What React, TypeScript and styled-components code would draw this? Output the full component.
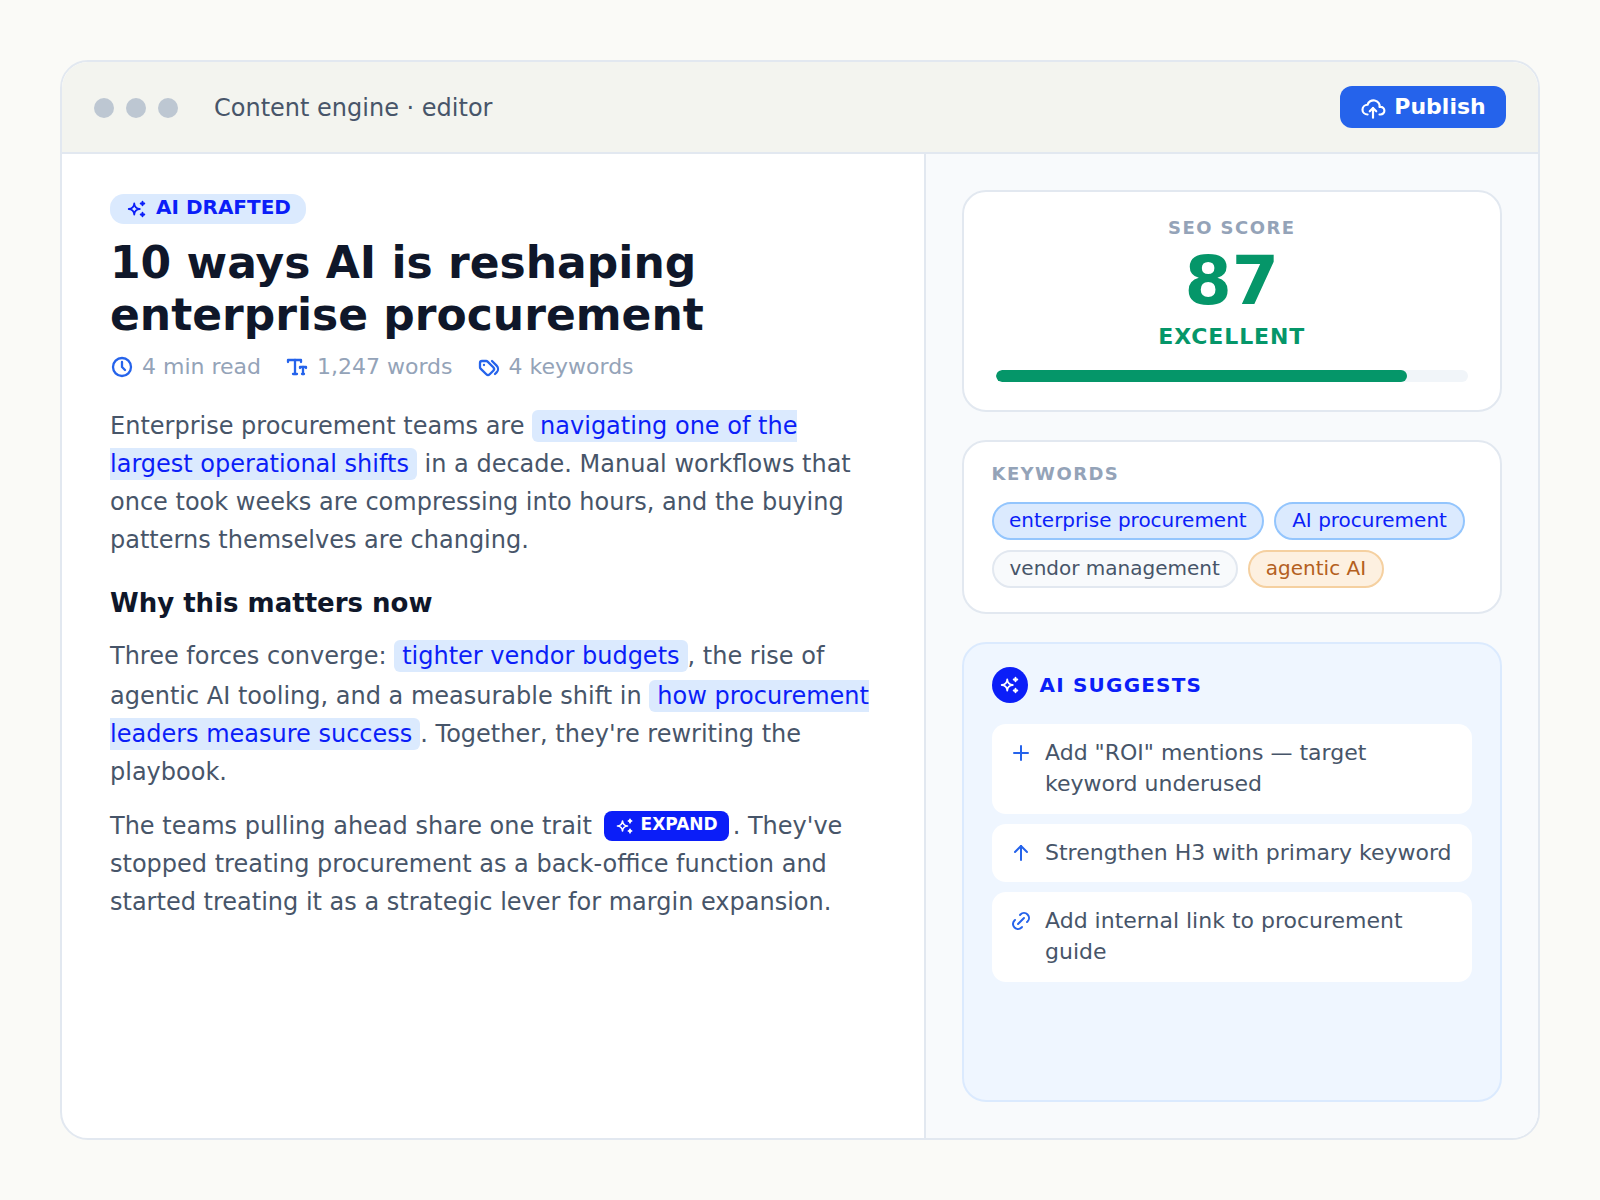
import styled, { createGlobalStyle } from "styled-components";
import { ReactElement } from "react";
import {
    TbArrowUp,
    TbClock,
    TbCloudUpload,
    TbLink,
    TbPlus,
    TbSparkles,
    TbTags,
    TbTextSize,
} from "react-icons/tb";

const BLUE = "#0b1ef8";

const GlobalStyle = createGlobalStyle`
  html, body {
    margin: 0;
    padding: 0;
    background: #fafaf7;
    font-family: "DejaVu Sans", sans-serif;
  }
`

const Page = styled.div`
  width: 1600px;
  height: 1200px;
  box-sizing: border-box;
  padding: 60px;
`

const Window = styled.div`
  height: 1080px;
  box-sizing: border-box;
  display: flex;
  flex-direction: column;
  background: #fff;
  border: 2px solid #e2e8f0;
  border-radius: 28px;
  overflow: hidden;
`

const TitleBar = styled.header`
  display: flex;
  align-items: center;
  padding: 24px 32px;
  background: #f3f4ef;
  border-bottom: 2px solid #e2e8f0;
`

const Dots = styled.div`
  display: flex;
  gap: 12px;
  margin-right: 36px;
  padding-top: 2px;
`

const Dot = styled.span`
  width: 20px;
  height: 20px;
  border-radius: 50%;
  background: #bdc7d2;
`

const WindowTitle = styled.div`
  flex: 1;
  padding-top: 2px;
  font-size: 24px;
  color: #475569;
`

const PublishButton = styled.button`
  display: flex;
  align-items: center;
  justify-content: center;
  gap: 8px;
  width: 166px;
  height: 42px;
  padding: 0 0 2px;
  border: none;
  border-radius: 12px;
  background: #2563eb;
  color: #fff;
  font-family: inherit;
  font-size: 22px;
  font-weight: 700;

  svg {
    margin-top: 3px;
  }
`

const Split = styled.div`
  flex: 1;
  min-height: 0;
  display: grid;
  grid-template-columns: 1fr 614.5px;
`

const Article = styled.main`
  padding: 40px 48px;
`

const DraftBadge = styled.span`
  display: inline-flex;
  align-items: center;
  gap: 8px;
  height: 30px;
  box-sizing: border-box;
  padding: 0 15px 4px 16px;
  border-radius: 14px;
  background: #dbeafe;
  color: ${BLUE};
  font-size: 20px;
  font-weight: 700;
  vertical-align: top;

  svg {
    margin-top: 4px;
  }
`

const Title = styled.h1`
  margin: 13px 0 0;
  font-size: 44px;
  line-height: 52px;
  font-weight: 700;
  color: #0f172a;
`

const Meta = styled.div`
  display: flex;
  gap: 24px;
  margin: 13px 0 28px;
`

const MetaItem = styled.span`
  display: flex;
  align-items: center;
  gap: 8px;
  font-size: 22px;
  color: #94a3b8;

  svg {
    color: #2563eb;
    stroke-width: 2.3;
  }
`

const Paragraph = styled.p`
  margin: 16px 0 0;
  font-size: 24px;
  line-height: 38px;
  color: #475569;

  ${Meta} + & {
    margin-top: 0;
  }
`

const Highlight = styled.span`
  padding: 2px 8px;
  border-radius: 6px;
  background: #dbeafe;
  color: ${BLUE};
`

const TallLine = styled.span`
  display: inline-block;
  width: 0;
  height: 29.25px;
`

const ExpandTag = styled.span`
  display: inline-flex;
  align-items: center;
  gap: 6px;
  height: 30px;
  box-sizing: border-box;
  padding: 0 11px 4px;
  margin: 0 4px;
  border-radius: 8px;
  background: ${BLUE};
  color: #fff;
  font-size: 17px;
  font-weight: 700;
  vertical-align: -2px;

  svg {
    margin-top: 4px;
  }
`

const SubHeading = styled.h3`
  margin: 26px 0 0;
  font-size: 26px;
  line-height: 36px;
  font-weight: 700;
  color: #0f172a;
`

const Sidebar = styled.aside`
  display: flex;
  flex-direction: column;
  gap: 28px;
  padding: 36px;
  background: #f8fafc;
  border-left: 2px solid #e2e8f0;
`

const Card = styled.section`
  padding: 21px 28px 24px;
  background: #fff;
  border: 2px solid #e2e8f0;
  border-radius: 24px;
`

const ScoreCard = styled(Card)`
  padding: 25px 32px 28px;
  text-align: center;
`

const Label = styled.div`
  font-size: 18px;
  line-height: 22px;
  font-weight: 700;
  letter-spacing: 1.44px;
  color: #94a3b8;
`

const Score = styled.div`
  margin: 2px 0 1px;
  font-size: 68px;
  line-height: 80px;
  font-weight: 700;
  color: #059669;
`

const ScoreWord = styled.div`
  font-size: 22px;
  line-height: 30px;
  font-weight: 700;
  letter-spacing: 0.88px;
  color: #059669;
`

const Track = styled.div`
  height: 12px;
  margin-top: 18px;
  border-radius: 6px;
  background: #f1f5f9;
  overflow: hidden;
`

const Fill = styled.div`
  height: 100%;
  border-radius: 6px;
  background: #059669;
`

const Pills = styled.div`
  display: flex;
  flex-wrap: wrap;
  gap: 10px;
  margin-top: 17px;
`

const Pill = styled.span<{ $tone: "blue" | "grey" | "orange" }>`
  padding: 2px 16px 4px;
  border-radius: 20px;
  font-size: 20px;
  line-height: 28px;
  border: 2px solid ${p => ({ blue: "#93c5fd", grey: "#e2e8f0", orange: "#f5d0a0" })[p.$tone]};
  background: ${p => ({ blue: "#dbeafe", grey: "#f8fafc", orange: "#fdf0e0" })[p.$tone]};
  color: ${p => ({ blue: BLUE, grey: "#475569", orange: "#b45f20" })[p.$tone]};

  &:first-child {
    padding: 2px 15.5px 4px;
  }
`

const SuggestCard = styled(Card)`
  flex: 1;
  padding-top: 23px;
  background: #eff6ff;
  border-color: #dbeafe;
`

const SuggestHead = styled.div`
  display: flex;
  align-items: center;
  gap: 12px;
  font-size: 20px;
  font-weight: 700;
  letter-spacing: 1.2px;
  color: ${BLUE};
`

const SparkCircle = styled.span`
  display: flex;
  align-items: center;
  justify-content: center;
  width: 36px;
  height: 36px;
  border-radius: 50%;
  background: ${BLUE};
  color: #fff;
`

const SuggestList = styled.div`
  display: flex;
  flex-direction: column;
  gap: 10px;
  margin-top: 21px;
`

const SuggestItem = styled.div`
  display: flex;
  gap: 12px;
  padding: 14px 18px 14px 17.5px;
  border-radius: 14px;
  background: #fff;
  font-size: 22px;
  line-height: 1.4;
  color: #475569;

  svg {
    flex: none;
    margin-top: 3px;
    color: #2563eb;
  }
`

export const App = (): ReactElement => {
    return (
        <Page>
            <GlobalStyle />
            <Window>
                <TitleBar>
                    <Dots>
                        <Dot />
                        <Dot />
                        <Dot />
                    </Dots>
                    <WindowTitle>Content engine · editor</WindowTitle>
                    <PublishButton>
                        <TbCloudUpload size={26} />
                        Publish
                    </PublishButton>
                </TitleBar>

                <Split>
                    <Article>
                        <DraftBadge>
                            <TbSparkles size={22} />
                            AI DRAFTED
                        </DraftBadge>
                        <Title>10 ways AI is reshaping enterprise procurement</Title>
                        <Meta>
                            <MetaItem><TbClock size={24} />4 min read</MetaItem>
                            <MetaItem><TbTextSize size={24} />1,247 words</MetaItem>
                            <MetaItem><TbTags size={24} />4 keywords</MetaItem>
                        </Meta>

                        <Paragraph>
                            Enterprise procurement teams are <Highlight>navigating one of the largest operational shifts</Highlight> in a decade. Manual workflows that once took weeks are compressing into hours, and the buying patterns themselves are changing.
                        </Paragraph>

                        <SubHeading>Why this matters now</SubHeading>

                        <Paragraph>
                            Three forces converge: <Highlight>tighter vendor budgets</Highlight>, the rise of agentic<TallLine /> AI tooling, and a measurable shift in <Highlight>how procurement leaders measure success</Highlight>. Together, they're rewriting the playbook.
                        </Paragraph>

                        <Paragraph>
                            The teams pulling ahead share one trait <ExpandTag><TbSparkles size={20} />EXPAND</ExpandTag>. They've stopped treating procurement as a back-office function and started treating it as a strategic lever for margin expansion.
                        </Paragraph>
                    </Article>

                    <Sidebar>
                        <ScoreCard>
                            <Label>SEO SCORE</Label>
                            <Score>87</Score>
                            <ScoreWord>EXCELLENT</ScoreWord>
                            <Track>
                                <Fill style={{ width: "87%" }} />
                            </Track>
                        </ScoreCard>

                        <Card>
                            <Label>KEYWORDS</Label>
                            <Pills>
                                <Pill $tone="blue">enterprise procurement</Pill>
                                <Pill $tone="blue">AI procurement</Pill>
                                <Pill $tone="grey">vendor management</Pill>
                                <Pill $tone="orange">agentic AI</Pill>
                            </Pills>
                        </Card>

                        <SuggestCard>
                            <SuggestHead>
                                <SparkCircle><TbSparkles size={22} /></SparkCircle>
                                AI SUGGESTS
                            </SuggestHead>
                            <SuggestList>
                                <SuggestItem>
                                    <TbPlus size={24} />
                                    <span>Add "ROI" mentions — target keyword underused</span>
                                </SuggestItem>
                                <SuggestItem>
                                    <TbArrowUp size={24} />
                                    <span>Strengthen H3 with primary keyword</span>
                                </SuggestItem>
                                <SuggestItem>
                                    <TbLink size={24} />
                                    <span>Add internal link to procurement guide</span>
                                </SuggestItem>
                            </SuggestList>
                        </SuggestCard>
                    </Sidebar>
                </Split>
            </Window>
        </Page>
    )
}

export default App
